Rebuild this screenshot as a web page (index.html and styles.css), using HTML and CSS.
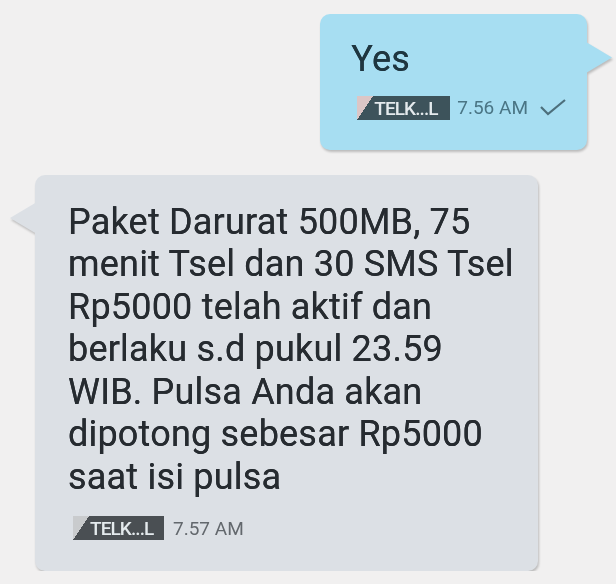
FILE: index.html
```html
<!DOCTYPE html>
<html lang="en">
<head>
  <meta charset="UTF-8">
  <meta name="viewport" content="width=device-width, initial-scale=1.0">
  <title>Messages</title>
  <link rel="stylesheet" href="styles.css">
</head>
<body>

  <div class="thread">
    <div class="bubble sent">
      <div class="text">Yes</div>
      <div class="meta">
        <span class="sim">TELK...L</span>
        <span class="time">7.56 AM</span>
        <svg class="check" width="28" height="20" viewBox="0 0 28 20">
          <path d="M2 9 L9 16 L26 2" fill="none" stroke="#4d6f7c" stroke-width="2.2"/>
        </svg>
      </div>
    </div>

    <div class="bubble received">
      <div class="text">Paket Darurat 500MB, 75<br>menit Tsel dan 30 SMS Tsel<br>Rp5000 telah aktif dan<br>berlaku s.d pukul 23.59<br>WIB. Pulsa Anda akan<br>dipotong sebesar Rp5000<br>saat isi pulsa</div>
      <div class="meta">
        <span class="sim">TELK...L</span>
        <span class="time">7.57 AM</span>
      </div>
    </div>
  </div>

</body>
</html>
```

FILE: styles.css
```css
body {
  margin: 0;
  padding: 0;
  background-color: #f1f0f0;
  font-family: Roboto, "Noto Sans", sans-serif;
}

.thread {
  display: flex;
  flex-direction: column;
  padding-top: 14px;
}

.bubble {
  position: relative;
  border-radius: 10px;
  filter: drop-shadow(1px 2px 1px rgba(0, 0, 0, 0.22));
}

/* little pointer on the side of each bubble */
.bubble::after {
  content: "";
  position: absolute;
  top: 28px;
  width: 26px;
  height: 31px;
}

.sent {
  align-self: flex-end;
  margin-right: 29px;
  padding: 24px 20px 30px 31px;
  background-color: #a7def2;
  color: #1f3640;
}

.sent::after {
  right: -25px;
  background-color: #a7def2;
  clip-path: polygon(0 0, 100% 50%, 0 100%);
}

.received {
  align-self: flex-start;
  width: 470px;
  margin-left: 35px;
  margin-top: 25px;
  padding: 26px 0 31px 33px;
  background-color: #dce0e5;
  color: #262b30;
}

.received::after {
  left: -25px;
  background-color: #dce0e5;
  clip-path: polygon(100% 0, 0 50%, 100% 100%);
}

.text {
  font-size: 36px;
  line-height: 42.5px;
  letter-spacing: 0.2px;
  text-shadow: 0 0 0.6px currentColor;
}

.meta {
  display: flex;
  align-items: center;
  margin-top: 15px;
  margin-left: 6px;
  height: 24px;
}

.received .meta {
  margin-top: 18px;
  margin-left: 5px;
}

.sim {
  display: inline-block;
  width: 93px;
  height: 24px;
  line-height: 25px;
  padding-left: 17px;
  box-sizing: border-box;
  font-size: 19px;
  font-weight: 500;
  letter-spacing: -0.9px;
  color: #e4eaed;
  background:
    linear-gradient(#3d535b, #3d535b) 16px 0 / 100% 100% no-repeat,
    linear-gradient(to top left, #3d535b 50%, #dcc6c6 50%) 0 0 / 16px 100% no-repeat;
}

.received .sim {
  width: 91px;
  background:
    linear-gradient(#4a4f53, #4a4f53) 16px 0 / 100% 100% no-repeat,
    linear-gradient(to top left, #4a4f53 50%, #c9cbcd 50%) 0 0 / 16px 100% no-repeat;
}

.time {
  margin-left: 7px;
  font-size: 19px;
  color: #4a7585;
}

.received .time {
  margin-left: 9px;
  color: #63686d;
}

.check {
  margin-left: 11px;
}
```
